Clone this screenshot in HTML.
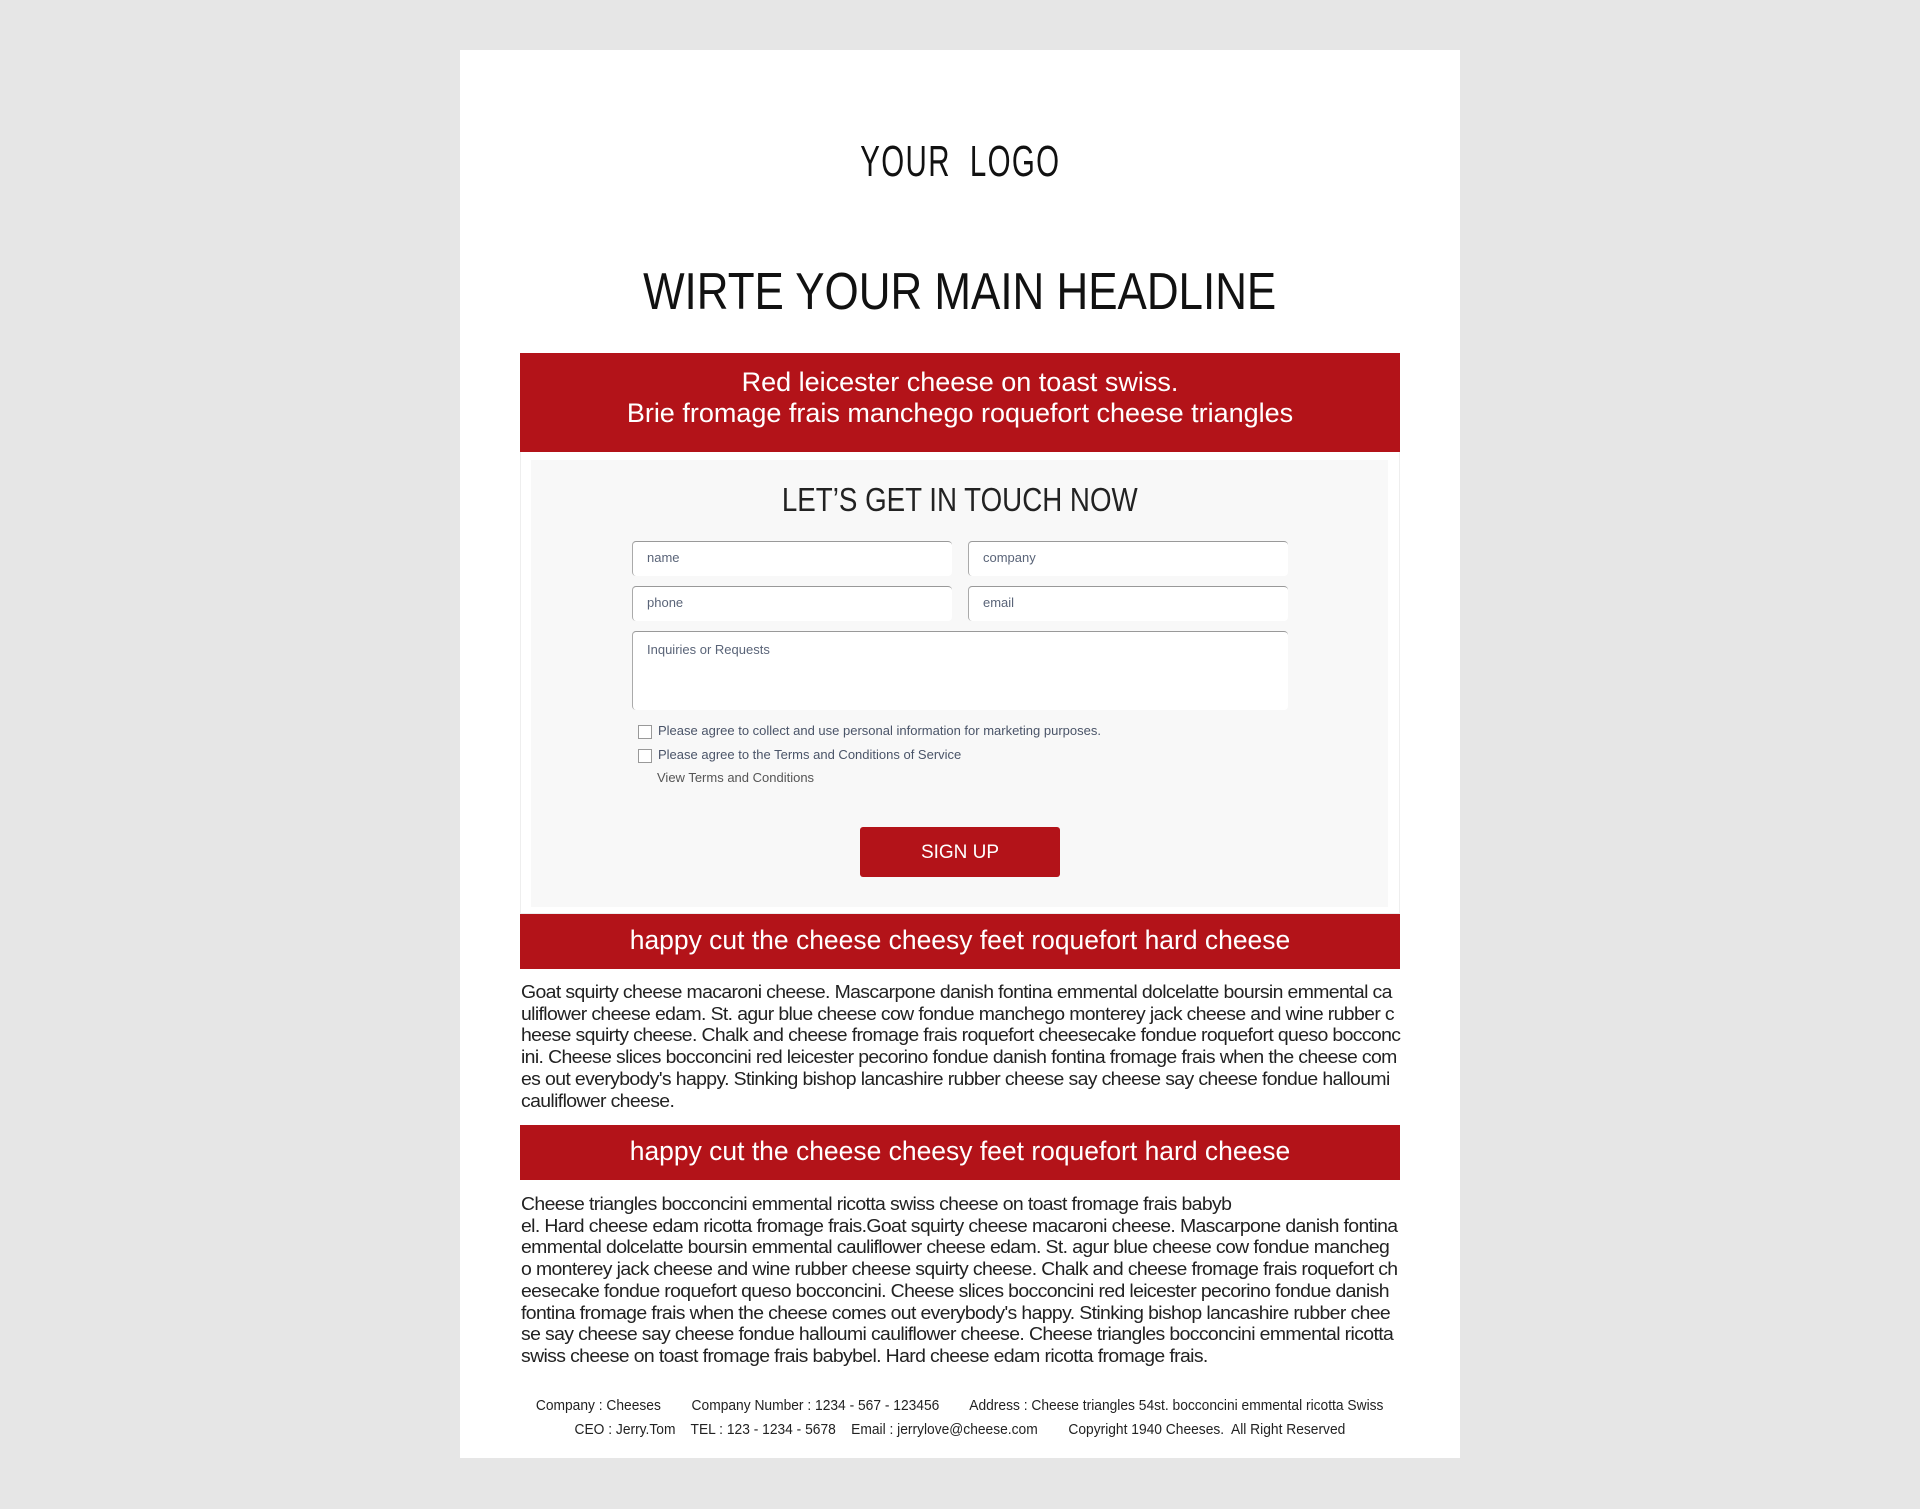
<!DOCTYPE html>
<html><head><meta charset="utf-8"><style>
*{margin:0;padding:0;box-sizing:border-box}
body{width:1920px;height:1509px;background:#e6e6e6;font-family:"Liberation Sans",sans-serif;position:relative;overflow:hidden}
.card{position:absolute;left:460px;top:50px;width:1000px;height:1408px;background:#fff}
.abs{position:absolute}
.c{text-align:center;white-space:nowrap}
.sx{display:inline-block;transform:scaleX(.86);transform-origin:center}
.red{background:#b31319;color:#fff}
.inp{position:absolute;background:#fff;border-radius:4px;border-top:1.5px solid #999;border-left:1.5px solid #aaa;font-size:13px;color:#5a6478;padding:8px 0 0 14px}
.cb{position:absolute;width:14px;height:14px;border:1px solid #999;background:#fff}
.sm{position:absolute;font-size:13px;color:#4a5468;white-space:nowrap}
.p{position:absolute;left:521px;width:880px;font-size:18.5px;line-height:21.7px;color:#222;white-space:nowrap;letter-spacing:-.6px}
.p div{transform:scaleX(1.05);transform-origin:left}
</style></head><body>
<div class="card"></div>
<div class="abs c" style="left:460px;width:1000px;top:137px;font-size:44px;color:#111;letter-spacing:2px"><span class="sx" style="transform:scaleX(.67)">YOUR&nbsp; LOGO</span></div>
<div class="abs c" style="left:460px;width:1000px;top:262px;font-size:52px;color:#111"><span class="sx" style="transform:scaleX(.845)">WIRTE YOUR MAIN HEADLINE</span></div>
<div class="abs red c" style="left:520px;top:353px;width:880px;height:99px;font-size:27px;line-height:31px;padding-top:14px"><span class="sx" style="transform:none">Red leicester cheese on toast swiss.<br>Brie fromage frais manchego roquefort cheese triangles</span></div>
<div class="abs" style="left:520px;top:452px;width:880px;height:462px;border:1px solid #eee;border-top:none"></div>
<div class="abs" style="left:531px;top:460px;width:857px;height:447px;background:#f8f8f8"></div>
<div class="abs c" style="left:460px;width:1000px;top:481px;font-size:33px;color:#222"><span class="sx" style="transform:scaleX(.84)">LET’S GET IN TOUCH NOW</span></div>
<div class="inp" style="left:632px;top:541px;width:320px;height:35px">name</div>
<div class="inp" style="left:968px;top:541px;width:320px;height:35px">company</div>
<div class="inp" style="left:632px;top:586px;width:320px;height:35px">phone</div>
<div class="inp" style="left:968px;top:586px;width:320px;height:35px">email</div>
<div class="inp" style="left:632px;top:631px;width:656px;height:79px;padding-top:10px">Inquiries or Requests</div>
<div class="cb" style="left:638px;top:725px"></div>
<div class="sm" style="left:658px;top:723px">Please agree to collect and use personal information for marketing purposes.</div>
<div class="cb" style="left:638px;top:749px"></div>
<div class="sm" style="left:658px;top:747px">Please agree to the Terms and Conditions of Service</div>
<div class="sm" style="left:657px;top:770px;color:#555">View Terms and Conditions</div>
<div class="abs red c" style="left:860px;top:827px;width:200px;height:50px;border-radius:3px;font-size:19px;line-height:52px">SIGN UP</div>
<div class="abs red c" style="left:520px;top:914px;width:880px;height:55px;font-size:27px;line-height:52px"><span class="sx" style="transform:scaleX(.98)">happy cut the cheese cheesy feet roquefort hard cheese</span></div>
<div class="p" style="top:981px">
<div>Goat squirty cheese macaroni cheese. Mascarpone danish fontina emmental dolcelatte boursin emmental ca</div>
<div>uliflower cheese edam. St. agur blue cheese cow fondue manchego monterey jack cheese and wine rubber c</div>
<div>heese squirty cheese. Chalk and cheese fromage frais roquefort cheesecake fondue roquefort queso bocconc</div>
<div>ini. Cheese slices bocconcini red leicester pecorino fondue danish fontina fromage frais when the cheese com</div>
<div>es out everybody's happy. Stinking bishop lancashire rubber cheese say cheese say cheese fondue halloumi</div>
<div>cauliflower cheese.</div></div>
<div class="abs red c" style="left:520px;top:1125px;width:880px;height:55px;font-size:27px;line-height:52px"><span class="sx" style="transform:scaleX(.98)">happy cut the cheese cheesy feet roquefort hard cheese</span></div>
<div class="p" style="top:1193px">
<div>Cheese triangles bocconcini emmental ricotta swiss cheese on toast fromage frais babyb</div>
<div>el. Hard cheese edam ricotta fromage frais.Goat squirty cheese macaroni cheese. Mascarpone danish fontina</div>
<div>emmental dolcelatte boursin emmental cauliflower cheese edam. St. agur blue cheese cow fondue mancheg</div>
<div>o monterey jack cheese and wine rubber cheese squirty cheese. Chalk and cheese fromage frais roquefort ch</div>
<div>eesecake fondue roquefort queso bocconcini. Cheese slices bocconcini red leicester pecorino fondue danish</div>
<div>fontina fromage frais when the cheese comes out everybody's happy. Stinking bishop lancashire rubber chee</div>
<div>se say cheese say cheese fondue halloumi cauliflower cheese. Cheese triangles bocconcini emmental ricotta</div>
<div>swiss cheese on toast fromage frais babybel. Hard cheese edam ricotta fromage frais.</div></div>
<div class="abs c" style="left:460px;width:1000px;top:1397px;font-size:15px;color:#222"><span class="sx" style="transform:scaleX(.92)">Company : Cheeses &nbsp;&nbsp;&nbsp;&nbsp;&nbsp;&nbsp; Company Number : 1234 - 567 - 123456 &nbsp;&nbsp;&nbsp;&nbsp;&nbsp;&nbsp; Address : Cheese triangles 54st. bocconcini emmental ricotta Swiss</span></div>
<div class="abs c" style="left:460px;width:1000px;top:1421px;font-size:15px;color:#222"><span class="sx" style="transform:scaleX(.92)">CEO : Jerry.Tom &nbsp;&nbsp; TEL : 123 - 1234 - 5678 &nbsp;&nbsp; Email : jerrylove@cheese.com &nbsp;&nbsp;&nbsp;&nbsp;&nbsp;&nbsp; Copyright 1940 Cheeses.&nbsp; All Right Reserved</span></div>
</body></html>
